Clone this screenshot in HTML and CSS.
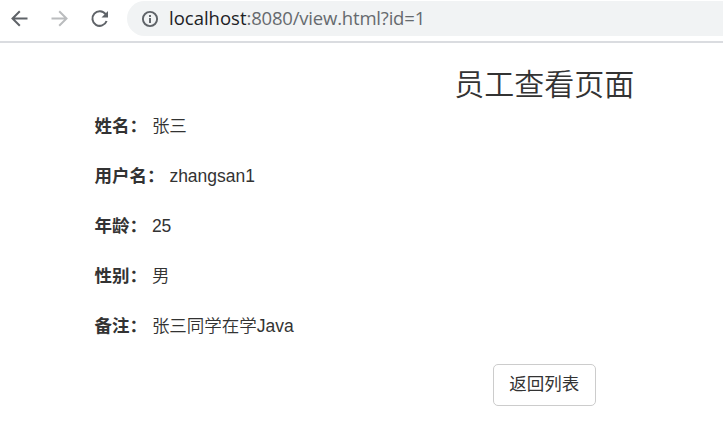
FILE: index.html
```html
<!DOCTYPE html>
<html lang="zh-CN">
<head>
<meta charset="utf-8">
<title>员工查看页面</title>
<link rel="stylesheet" href="styles.css">
</head>
<body>
<header class="toolbar">
  <svg class="nav" viewBox="0 0 20 20"><path d="M18.5 9.5H4M10.8 2.2L3.5 9.5L10.8 16.8"/></svg>
  <svg class="nav disabled" viewBox="0 0 20 20"><path d="M2.5 9.5H17M10.2 2.2L17.5 9.5L10.2 16.8"/></svg>
  <svg class="nav" viewBox="0 0 20 20"><path d="M16.6 5.2A7.3 7.3 0 1 0 17.6 12"/><path class="solid" d="M19 2V8.5H12.5Z"/></svg>
  <div class="address">
    <svg class="info" viewBox="0 0 18 18"><circle cx="9" cy="9" r="7.1"/><path d="M9 8V13M9 5V7"/></svg>
    <span class="url"><span class="host">localhost</span>:8080/view.html?id=1</span>
  </div>
</header>
<main class="container">
  <h3 class="title">员工查看页面</h3>
  <div class="row"><label>姓名：</label> <span>张三</span></div>
  <div class="row"><label>用户名：</label> <span>zhangsan1</span></div>
  <div class="row"><label>年龄：</label> <span>25</span></div>
  <div class="row"><label>性别：</label> <span>男</span></div>
  <div class="row"><label>备注：</label> <span>张三同学在学Java</span></div>
  <div class="actions"><button class="back" type="button">返回列表</button></div>
</main>
</body>
</html>
```
FILE: styles.css
```css
* { box-sizing: border-box; }
body {
  margin: 0;
  height: 423px;
  overflow: hidden;
  background: #fff;
  color: #333;
  font: 17.5px/25px "Liberation Sans", "Noto Sans CJK SC", sans-serif;
}
.toolbar {
  display: flex;
  align-items: flex-start;
  height: 43px;
  padding: 1px 0 0 9px;
  border-bottom: 2px solid #dadce0;
}
.nav {
  flex: none;
  width: 20px;
  height: 20px;
  margin: 8px 20px 0 0;
  fill: none;
  stroke: #5f6368;
  stroke-width: 2;
}
.nav .solid { fill: #5f6368; stroke: none; }
.disabled { stroke: #babcbe; }
.address {
  display: flex;
  flex: 1;
  align-items: center;
  height: 35px;
  margin-left: -2px;
  padding-left: 14px;
  border-radius: 18px 0 0 18px;
  background: #f1f3f4;
}
.info {
  width: 18px;
  height: 18px;
  margin-right: 10px;
  fill: none;
  stroke: #5f6368;
  stroke-width: 1.9;
}
.url {
  height: 35px;
  color: #666a6e;
  font: 18.5px/33px "Open Sans", "Noto Sans", sans-serif;
  letter-spacing: -0.19px;
  white-space: nowrap;
}
.host { color: #202124; letter-spacing: 0; }
.container {
  padding: 25px 0 0 94.5px;
}
.title {
  margin: 0 0 13px 271px;
  font-size: 30px;
  font-weight: 350;
  line-height: 33px;
  text-align: center;
}
.row {
  height: 25px;
  margin-bottom: 25px;
  font-weight: 350;
  white-space: nowrap;
}
.row label { font-weight: 700; }
.actions {
  display: flex;
  justify-content: center;
  margin: 1px 0 0 271px;
}
.back {
  width: 103px;
  height: 42px;
  padding: 0 0 2px;
  border: 1px solid #ccc;
  border-radius: 5px;
  background: #fff;
  color: #333;
  font: inherit;
}
```
